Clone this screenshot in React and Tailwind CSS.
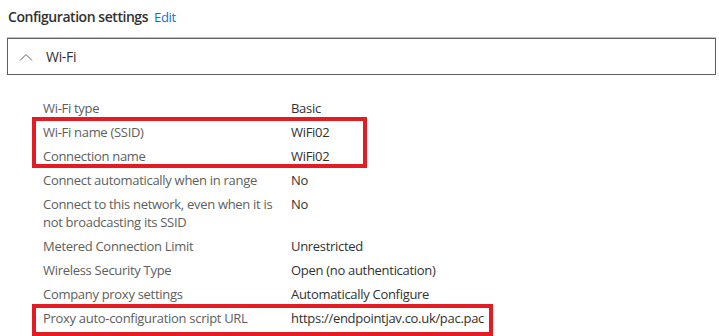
const rows = [
  { label: 'Wi-Fi type', value: 'Basic' },
  { label: 'Wi-Fi name (SSID)', value: 'WiFi02' },
  { label: 'Connection name', value: 'WiFi02' },
  { label: 'Connect automatically when in range', value: 'No' },
  {
    label: (
      <>
        Connect to this network, even when it is
        <br />
        not broadcasting its SSID
      </>
    ),
    value: 'No',
  },
  { label: 'Metered Connection Limit', value: 'Unrestricted' },
  { label: 'Wireless Security Type', value: 'Open (no authentication)' },
  { label: 'Company proxy settings', value: 'Automatically Configure' },
  { label: 'Proxy auto-configuration script URL', value: 'https://endpointjav.co.uk/pac.pac' },
];

function Row({ label, value }) {
  return (
    <div className="flex py-[3px] leading-[18px]">
      <div className="w-[248px] shrink-0 text-[#605e5c]">{label}</div>
      <div className="text-[#323130]">{value}</div>
    </div>
  );
}

export default function App() {
  return (
    <div
      className="relative h-[336px] w-[719px] overflow-hidden bg-white text-[13px] tracking-[-0.3px] text-[#323130]"
      style={{ fontFamily: '"Open Sans", "Noto Sans", sans-serif' }}
    >
      <div className="flex items-baseline gap-[6px] pl-[8px] pt-[7px] leading-[20px]">
        <span className="text-[14px] font-semibold tracking-[-0.45px]">Configuration settings</span>
        <a className="text-[13px] text-[#0078d4]">Edit</a>
      </div>

      <div className="ml-[7px] mt-[11px] flex h-[37px] w-[709px] items-center border border-[#605e5c] shadow-[0_-1px_0_#c8c6c4]">
        <svg className="ml-[11px] mr-[13px] h-[8px] w-[14px]" viewBox="0 0 14 8" fill="none">
          <path d="M1 7.5 L7 1.5 L13 7.5" stroke="#605e5c" strokeWidth="1" />
        </svg>
        <span className="text-[14px]">Wi-Fi</span>
      </div>

      <div className="relative ml-[43px] mt-[21px]">
        {rows.map((r, i) => (
          <Row key={i} label={r.label} value={r.value} />
        ))}
      </div>

      <div className="pointer-events-none absolute left-[32px] top-[117px] h-[51px] w-[335px] border-4 border-[#e31b23]" />
      <div className="pointer-events-none absolute left-[32px] top-[304px] h-[32px] w-[461px] border-4 border-[#e31b23]" />
    </div>
  );
}
